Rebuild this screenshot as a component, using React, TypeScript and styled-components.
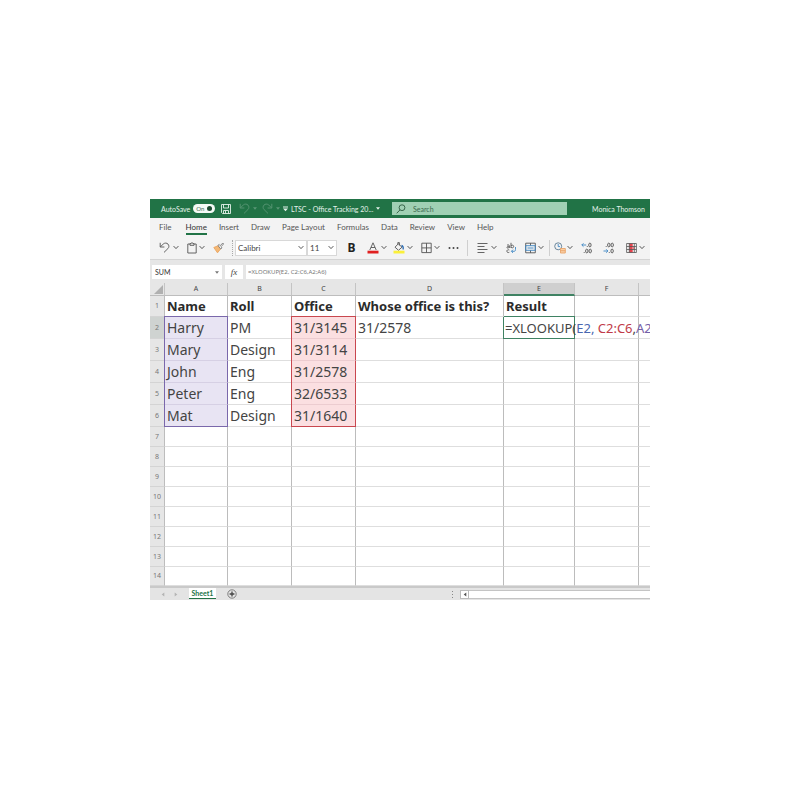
import React from "react";
import styled, { createGlobalStyle, css } from "styled-components";

const Global = createGlobalStyle`
  *, *::before, *::after { box-sizing: border-box; }
  body { margin: 0; background: #fff; color: #444; font-family: Lato, "Noto Sans", sans-serif; font-size: 8px; }
  button, input, select { font: inherit; color: inherit; margin: 0; padding: 0; border: 0; background: none; border-radius: 0; }
  button { display: flex; align-items: center; justify-content: center; cursor: pointer; }
  svg { flex: none; }
`;

const Page = styled.main`
  padding: 199px 150px;
`;

const Workbook = styled.div`
  overflow: hidden;
  background: #e6e6e6;
`;

const TitleBar = styled.header`
  display: flex;
  align-items: center;
  height: 19px;
  padding: 0 5px 0 11px;
  background: #217346;
  color: #e4f2ea;
  font-size: 7px;
  white-space: nowrap;
`;

const AutoSave = styled.label`
  display: flex;
  flex: none;
  align-items: center;
  gap: 3px;
  width: 60px;
`;

const Toggle = styled.span`
  display: flex;
  align-items: center;
  justify-content: space-between;
  width: 22px;
  height: 9px;
  padding: 0 3px;
  border-radius: 5px;
  background: #f4faf6;
  color: #3f6b52;
  font-size: 6px;
`;

const ToggleInput = styled.input`
  && {
    appearance: none;
    width: 5px;
    height: 5px;
    border-radius: 50%;
    background: #1b4a30;
  }
`;

const IconButton = styled.button<{ $w: number; $l?: number; $dim?: boolean }>`
  && {
    flex: none;
    justify-content: space-between;
    width: ${(p) => p.$w}px;
    height: 16px;
    margin-left: ${(p) => p.$l ?? 0}px;
    opacity: ${(p) => (p.$dim ? 0.25 : 1)};
  }
  svg { display: block; }
`;

const BoldButton = styled(IconButton)`
  && {
    justify-content: center;
    color: #222;
    font-family: "Noto Sans", sans-serif;
    font-size: 12px;
    font-weight: 700;
  }
`;

const FileName = styled.button`
  && {
    flex: none;
    justify-content: flex-start;
    gap: 3px;
    width: 98px;
    margin-left: 3px;
  }
`;

const SearchBox = styled.label`
  display: flex;
  align-items: center;
  flex: 0 1 175px;
  height: 13px;
  margin-left: 11px;
  padding: 0 4px;
  gap: 7px;
  background: #a0d0b4;
  color: #2d5a40;
`;

const SearchInput = styled.input`
  min-width: 0;
  flex: 1;
  outline: 0;
  &::placeholder { color: #3b6a4e; opacity: 1; }
`;

const Account = styled.button`
  && { margin-left: auto; }
`;

const Tabs = styled.nav`
  display: flex;
  gap: 12px;
  height: 18px;
  padding-left: 9px;
  background: #f3f3f3;
`;

const Tab = styled.a<{ $active?: boolean }>`
  display: block;
  height: 17px;
  line-height: 18px;
  color: ${(p) => (p.$active ? "#333" : "#555")};
  border-bottom: 2px solid ${(p) => (p.$active ? "#217346" : "transparent")};
  text-decoration: none;
  white-space: nowrap;
  &:first-child { margin-right: 2px; }
`;

const Toolbar = styled.div`
  display: flex;
  align-items: center;
  height: 24px;
  padding-left: 9px;
  background: #f3f3f3;
  border-bottom: 1px solid #d4d4d4;
`;

const Divider = styled.span<{ $l: number; $dotted?: boolean }>`
  flex: none;
  height: 16px;
  margin-left: ${(p) => p.$l}px;
  border-left: 1px ${(p) => (p.$dotted ? "dotted #aaa" : "solid #cfcfcf")};
`;

const Picker = styled.label<{ $w: number; $l?: number }>`
  display: flex;
  align-items: center;
  flex: none;
  width: ${(p) => p.$w}px;
  height: 16px;
  margin-left: ${(p) => p.$l ?? 0}px;
  padding: 0 2px;
  border: 1px solid #d8d8d8;
  background: #fff;
`;

const PickerSelect = styled.select`
  && {
    appearance: none;
    flex: 1;
    min-width: 0;
    outline: 0;
  }
`;

const FormulaBar = styled.div`
  display: flex;
  gap: 3px;
  height: 23px;
  padding: 5px 0 4px 2px;
  background: #e6e6e6;
`;

const NameBox = styled.label`
  display: flex;
  align-items: center;
  flex: none;
  width: 70px;
  padding: 0 3px;
  background: #fff;
  color: #333;
  font-size: 7px;
`;

const NameInput = styled.input`
  flex: 1;
  min-width: 0;
`;

const FxButton = styled.button`
  && {
    flex: none;
    width: 18px;
    background: #fff;
    font-family: "Liberation Serif", serif;
    font-style: italic;
    font-size: 9px;
  }
`;

const FormulaInput = styled.input`
  && {
    flex: 1;
    min-width: 0;
    padding-left: 2px;
    background: #fff;
    color: #777;
    font-family: "Noto Sans", sans-serif;
    font-size: 6px;
  }
`;

const Grid = styled.table`
  width: 100%;
  table-layout: fixed;
  border-collapse: separate;
  border-spacing: 0;
  background: #fff;
  font-family: "Noto Sans", sans-serif;
`;

const Col = styled.col<{ $w?: number }>`
  width: ${(p) => (p.$w ? `${p.$w}px` : "auto")};
`;

const ColHead = styled.th<{ $on?: boolean }>`
  height: 13px;
  padding: 0;
  background: ${(p) => (p.$on ? "#cfcfcf" : "#e6e6e6")};
  border-right: 1px solid #c4c4c4;
  border-bottom: ${(p) => (p.$on ? "2px solid #3f8263" : "1px solid #bdbdbd")};
  font-size: 7px;
  line-height: 10px;
  font-weight: 400;
  &:last-child { border-right: 0; }
  svg { display: block; margin-left: 4px; }
`;

const RowHead = styled.th<{ $h: number; $on?: boolean }>`
  height: ${(p) => p.$h}px;
  padding: 0;
  background: ${(p) => (p.$on ? "#cfd3d1" : "#e6e6e6")};
  border-right: 1px solid ${(p) => (p.$on ? "#3f8263" : "#bdbdbd")};
  border-bottom: 1px solid #d4d4d4;
  font-size: 7px;
  line-height: 10px;
  font-weight: 400;
  color: #777;
`;

type Tint = "name" | "office";
const tints = {
  name: { fill: "#e8e4f3", line: "#7a68ab", rule: "#d6d0e4" },
  office: { fill: "#fbdfe1", line: "#c9474f", rule: "#ecccd0" },
};

const Cell = styled.td<{ $tint?: Tint; $top?: boolean; $end?: boolean; $head?: boolean; $editing?: boolean }>`
  position: relative;
  padding: 0 0 0 2px;
  border-right: 1px solid #bcbcbc;
  border-bottom: 1px solid #dedede;
  font-size: 14px;
  line-height: 18px;
  white-space: nowrap;
  color: #444;
  &:last-child { border-right: 0; }
  ${(p) => p.$head && css`font-weight: 700; font-size: 13px; color: #2b2b2b;`}
  ${(p) => p.$tint && css`
    background: ${tints[p.$tint].fill};
    border-right-color: ${tints[p.$tint].line};
    border-bottom-color: ${p.$end ? tints[p.$tint].line : tints[p.$tint].rule};
    box-shadow: -1px 0 0 ${tints[p.$tint].line}${p.$top ? `, 0 -1px 0 ${tints[p.$tint].line}, -1px -1px 0 ${tints[p.$tint].line}` : ""};
  `}
  ${(p) => p.$editing && css`
    z-index: 1;
    padding-left: 1px;
    font-size: 13px;
    border-color: #3f8263;
    box-shadow: -1px 0 0 #3f8263, 0 -1px 0 #3f8263;
  `}
`;

const Ref = styled.span<{ $c: string }>`
  color: ${(p) => p.$c};
`;

const SheetBar = styled.footer`
  display: flex;
  align-items: center;
  height: 14px;
  padding-left: 11px;
  border-top: 2px solid #c9c9c9;
  background: #e4e4e4;
`;

const SheetTab = styled.button`
  && {
    flex: none;
    width: 27px;
    height: 11px;
    margin: 0 11px 1px 11px;
    background: #fff;
    border-bottom: 1px solid #217346;
    color: #217346;
    font-size: 7px;
    font-weight: 700;
  }
`;

const ScrollArea = styled.div`
  display: flex;
  align-items: center;
  flex: 0 0 199px;
  height: 12px;
  margin-left: auto;
`;

const ScrollButton = styled.button`
  && {
    flex: none;
    width: 9px;
    height: 9px;
    margin-left: 6px;
    background: #fff;
    border: 1px solid #bbb;
  }
`;

const ScrollTrack = styled.div`
  flex: 1;
  height: 9px;
  background: #fff;
  border: solid #c4c4c4;
  border-width: 1px 0;
`;

const Chevron = () => (
  <svg width="6" height="5" viewBox="0 0 6 5" fill="none" stroke="#555"><path d="M.6 1.100 3 3.600l2.400-2.500" /></svg>
);
const Caret = ({ color = "#777" }: { color?: string }) => (
  <svg width="4" height="3" viewBox="0 0 4 3" fill={color}><path d="M0 .3h4L2 2.700z" /></svg>
);
const Undo = ({ color = "#555", flip }: { color?: string; flip?: boolean }) => (
  <svg width="11" height="11" viewBox="0 0 11 11" fill="none" stroke={color} strokeWidth=".9">
    <path transform={flip ? "matrix(-1 0 0 1 11 0)" : undefined} d="M1.200.8v4.200h4.200M1.400 4.800l2.800-2.700c1.500-1.400 3.600-1.300 4.800 0s1.200 3.200-.1 4.500L5 10.400" />
  </svg>
);
const Icon = ({ w = 11, children }: { w?: number; children: React.ReactNode }) => (
  <svg width={w} height="12" viewBox={`0 0 ${w} 12`} fill="none" stroke="#555" strokeWidth=".9">{children}</svg>
);
const ZERO = "a1.200 1.900 0 1 0 2.400 0a1.200 1.900 0 1 0-2.400 0";

const tabs = ["File", "Home", "Insert", "Draw", "Page Layout", "Formulas", "Data", "Review", "View", "Help"];
const columns = [15, 63, 64, 64, 148, 71, 64, 0];
const letters = ["A", "B", "C", "D", "E", "F", ""];
const rows: string[][] = [
  ["Name", "Roll", "Office", "Whose office is this?", "Result"],
  ["Harry", "PM", "31/3145", "31/2578"],
  ["Mary", "Design", "31/3114"],
  ["John", "Eng", "31/2578"],
  ["Peter", "Eng", "32/6533"],
  ["Mat", "Design", "31/1640"],
  ...Array.from({ length: 8 }, () => [] as string[]),
];
const heightOf = (r: number) => (r === 0 ? 21 : r < 6 ? 22 : r === 13 ? 19 : 20);

export default function App() {
  return (
    <Page>
      <Global />
      <Workbook>
        <TitleBar>
          <AutoSave>AutoSave<Toggle>On<ToggleInput type="checkbox" defaultChecked /></Toggle></AutoSave>
          <IconButton $w={10} aria-label="Save">
            <svg width="10" height="10" viewBox="0 0 10 10" fill="none" stroke="#e4f2ea" strokeWidth=".9"><path d="M.5.5h9v9h-8l-1-1zM2.500.5v3.500h5V.5M2.500 9.500V6.500h5v3M4.500 7v2" /></svg>
          </IconButton>
          <IconButton $w={18} $l={8} $dim aria-label="Undo"><Undo color="#fff" /><Caret color="#fff" /></IconButton>
          <IconButton $w={18} $l={5} $dim aria-label="Redo"><Undo color="#fff" flip /><Caret color="#fff" /></IconButton>
          <FileName>
            <svg width="5" height="6" viewBox="0 0 5 6" fill="#e4f2ea"><path d="M0 .5h5v1H0zM0 2.500h5L2.500 5.300z" /></svg>
            LTSC - Office Tracking 20...
            <Caret color="#e4f2ea" />
          </FileName>
          <SearchBox>
            <svg width="10" height="10" viewBox="0 0 10 10" fill="none" stroke="#2d5a40" strokeWidth=".9"><circle cx="6" cy="3.700" r="2.900" /><path d="M4 5.900.7 9.300" /></svg>
            <SearchInput placeholder="Search" aria-label="Search" />
          </SearchBox>
          <Account>Monica Thomson</Account>
        </TitleBar>
        <Tabs>{tabs.map((t) => <Tab key={t} href="#" $active={t === "Home"}>{t}</Tab>)}</Tabs>
        <Toolbar>
          <IconButton $w={20} aria-label="Undo"><Undo /><Chevron /></IconButton>
          <IconButton $w={18} $l={8} aria-label="Paste">
            <Icon w={10}><path d="M3 2H.8v9h8.400V2H7" /><path d="M3 3.300V1.600h1.100a.9.9 0 0 1 1.800 0H7v1.700z" /></Icon><Chevron />
          </IconButton>
          <IconButton $w={11} $l={8} aria-label="Format painter">
            <Icon><path d="M.8 5.500 5 3.800 7.500 7 4.500 10.800z" fill="#f3b877" stroke="#eba55e" /><path d="m5 3.500 1.200-1 1 1.200L9.800 1l.8.9-2.500 2.800.9 1.200-1.300 1z" fill="#fff" stroke="#666" strokeWidth=".8" /></Icon>
          </IconButton>
          <Divider $l={8} $dotted />
          <Picker $w={72} $l={2}><PickerSelect aria-label="Font"><option>Calibri</option></PickerSelect><Chevron /></Picker>
          <Picker $w={30}><PickerSelect aria-label="Font size"><option>11</option></PickerSelect><Chevron /></Picker>
          <BoldButton $w={11} $l={9}>B</BoldButton>
          <IconButton $w={20} $l={10} aria-label="Font color">
            <Icon w={12}><path d="M2.800 8 6 .8 9.200 8M4 5.500h4" /><path d="M.5 8.700h11v2.800H.5z" fill="#e02020" stroke="none" /></Icon><Chevron />
          </IconButton>
          <IconButton $w={20} $l={6} aria-label="Fill color">
            <Icon w={12}><path d="M5.300 1.800 9 5.200 5.500 8.300 2 5.200zM4.800 2.200V.6h1.600v2.800" /><path d="M8.500 3.500c1.500.3 2 1.500 1.700 4" stroke="#2f6fb5" strokeWidth="1.300" /><path d="M.5 8.700h11v2.800H.5z" fill="#fbf03a" stroke="none" /></Icon><Chevron />
          </IconButton>
          <IconButton $w={19} $l={8} aria-label="Borders">
            <Icon><path d="M.8 1.200h9.400v9.400H.8zM5.500 1.200v9.400M.8 5.900h9.400" /></Icon><Chevron />
          </IconButton>
          <IconButton $w={11} $l={8} aria-label="More">
            <Icon><g fill="#444" stroke="none"><circle cx="1.500" cy="6" r="1" /><circle cx="5.500" cy="6" r="1" /><circle cx="9.500" cy="6" r="1" /></g></Icon>
          </IconButton>
          <Divider $l={8} />
          <IconButton $w={20} $l={9} aria-label="Align">
            <Icon><path d="M.5 1.500h10M.5 4.500h7M.5 7.500h10M.5 10.500h7" /></Icon><Chevron />
          </IconButton>
          <IconButton $w={11} $l={9} aria-label="Wrap text">
            <Icon>
              <path d="M1 3.200c1.200-.7 2.300-.3 2.300.8v2M3.300 4.400C1.800 4.400.9 4.700.9 5.400c0 .9 1.700.9 2.400-.2M5 .8V6M5 4c.3-1.200 2.700-1.200 2.700.5S5.300 6.200 5 5M3.300 8c-1.400-.6-2.400 0-2.400 1.200s1 1.700 2.400 1.100" />
              <path d="M9.500 5v2.500c0 1.200-.5 1.800-1.500 1.800H5.500M7 7.700 5.400 9.300 7 10.900" stroke="#3d87c4" />
            </Icon>
          </IconButton>
          <IconButton $w={19} $l={8} aria-label="Merge cells">
            <Icon><path d="M.7 1.200h9.600v9.600H.7zM5.500 1.200v2.500M5.500 8.300v2.500" /><path d="M.7 3.700h9.600v4.600H.7zM2.500 6h6" stroke="#3d87c4" /></Icon><Chevron />
          </IconButton>
          <Divider $l={5} />
          <IconButton $w={19} $l={4} aria-label="Number format">
            <Icon w={12}><circle cx="4.200" cy="4.300" r="3.500" stroke="#5c7a92" /><path d="M4.200 2v2.600H6" stroke="#3d87c4" /><path d="M6.500 6.500h4.800v4.500H6.500z" fill="#f8cfa6" stroke="#eba56a" /><path d="M6.500 8.700h4.800" stroke="#eba56a" /></Icon><Chevron />
          </IconButton>
          <IconButton $w={11} $l={8} aria-label="Increase decimal">
            <Icon><path d="M5.200 3H.8M2.500 1.300.8 3l1.700 1.700" stroke="#3d87c4" /><path d={`M7.700 3${ZERO}M4.600 9${ZERO}M8 9${ZERO}M6.300 4.900v-.9M3.200 10.900V10`} /></Icon>
          </IconButton>
          <IconButton $w={11} $l={11} aria-label="Decrease decimal">
            <Icon><path d="M.5 9h4.300M3.200 7.300 4.900 9l-1.700 1.700" stroke="#3d87c4" /><path d={`M4.600 3${ZERO}M8 3${ZERO}M7.900 9${ZERO}M3.200 4.900V4M6.300 10.900V10`} /></Icon>
          </IconButton>
          <IconButton $w={19} $l={12} aria-label="Conditional formatting">
            <Icon><path d="M3.300 1.500h3.400v9H3.300z" fill="#e5444e" stroke="none" /><path d="M6.700 4.500h1.800v3H6.700z" fill="#f08a90" stroke="none" /><path d="M.6 1.500h9.800v9H.6zM.6 4.500h9.800M.6 7.500h9.800M3.300 1.500v9M8.300 1.500v9" strokeWidth=".8" /></Icon><Chevron />
          </IconButton>
        </Toolbar>
        <FormulaBar>
          <NameBox><NameInput aria-label="Name box" defaultValue="SUM" /><Caret /></NameBox>
          <FxButton>fx</FxButton>
          <FormulaInput aria-label="Formula" defaultValue="=XLOOKUP(E2, C2:C6,A2;A6)" />
        </FormulaBar>
        <Grid>
          <colgroup>{columns.map((w, i) => <Col key={i} $w={w} />)}</colgroup>
          <thead>
            <tr>
              <ColHead aria-label="Select all"><svg width="9" height="9" viewBox="0 0 9 9" fill="#b0b0b0"><path d="M9 0v9H0z" /></svg></ColHead>
              {letters.map((l, i) => <ColHead key={i} $on={l === "E"}>{l}</ColHead>)}
            </tr>
          </thead>
          <tbody>
            {rows.map((row, r) => (
              <tr key={r}>
                <RowHead $h={heightOf(r)} $on={r === 1}>{r + 1}</RowHead>
                {letters.map((_, c) => {
                  const tinted = r > 0 && r < 6;
                  const editing = r === 1 && c === 4;
                  return (
                    <Cell key={c} $head={r === 0} $top={r === 1} $end={r === 5} $editing={editing}
                      $tint={tinted && c === 0 ? "name" : tinted && c === 2 ? "office" : undefined}>
                      {editing ? <>=XLOOKUP(<Ref $c="#4a67b0">E2, </Ref><Ref $c="#c03a48">C2:C6</Ref>,<Ref $c="#7460a8">A2;</Ref></> : row[c]}
                    </Cell>
                  );
                })}
              </tr>
            ))}
          </tbody>
        </Grid>
        <SheetBar>
          <IconButton $w={4} aria-label="Previous sheet"><svg width="4" height="5" viewBox="0 0 4 5" fill="#b4b4b4"><path d="M3.300.5v4L.7 2.500z" /></svg></IconButton>
          <IconButton $w={4} $l={9} aria-label="Next sheet"><svg width="4" height="5" viewBox="0 0 4 5" fill="#b4b4b4"><path d="M.7.5v4l2.600-2z" /></svg></IconButton>
          <SheetTab>Sheet1</SheetTab>
          <IconButton $w={10} aria-label="New sheet">
            <svg width="10" height="10" viewBox="0 0 10 10" fill="none" stroke="#666"><circle cx="5" cy="5" r="4.200" strokeWidth=".8" /><path d="M5 2.600v4.800M2.600 5h4.800" stroke="#444" strokeWidth="1.300" /></svg>
          </IconButton>
          <ScrollArea>
            <svg width="3" height="7" viewBox="0 0 3 7" fill="#888"><path d="M1 0h1v1H1zM1 3h1v1H1zM1 6h1v1H1z" /></svg>
            <ScrollButton aria-label="Scroll left"><svg width="4" height="5" viewBox="0 0 4 5" fill="#555"><path d="M3.300.5v4L.7 2.500z" /></svg></ScrollButton>
            <ScrollTrack />
          </ScrollArea>
        </SheetBar>
      </Workbook>
    </Page>
  );
}
